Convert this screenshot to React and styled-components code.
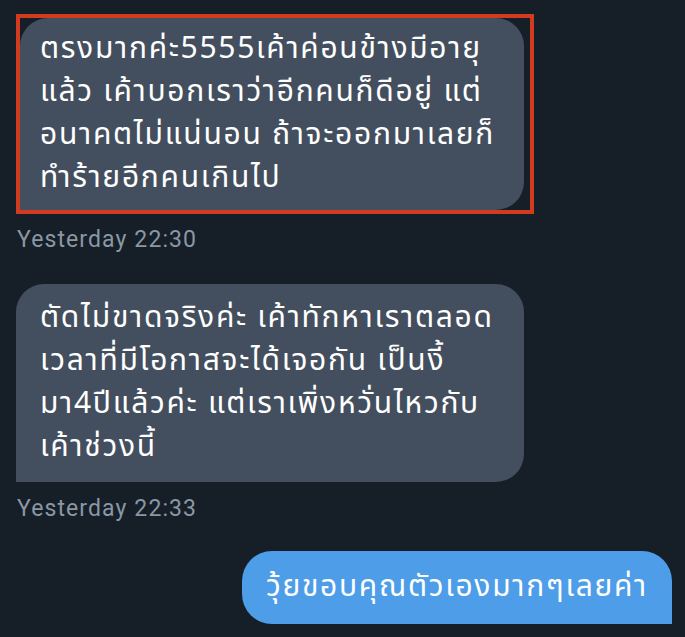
import styled, { createGlobalStyle } from 'styled-components';

const GlobalStyle = createGlobalStyle`
    html, body {
        margin: 0;
        padding: 0;
        background: #161e27;
    }
    body {
        font-family: "Noto Sans Thai", "Noto Sans", "DejaVu Sans", sans-serif;
        -webkit-font-smoothing: antialiased;
    }
`;

const Screen = styled.div`
    width: 685px;
    height: 637px;
    overflow: hidden;
    background: #161e27;
    display: flex;
    flex-direction: column;
    padding: 14px 0 0 0;
    box-sizing: border-box;
`;

const Highlight = styled.div`
    align-self: flex-start;
    margin-left: 16px;
    border: 4px solid #d33b20;
    padding: 0 6px 0 0;
    display: flex;
`;

const Bubble = styled.div`
    background: ${p => p.$sent ? '#4d9de8' : '#434f5e'};
    color: #ffffff;
    font-size: 30px;
    letter-spacing: 1.7px;
    line-height: 43px;
    white-space: nowrap;
    padding: ${p => p.$pad || '11px 24px'};
    border-radius: ${p => p.$sent ? '30px 30px 0 30px' : '28px 28px 28px 0'};
    width: ${p => p.$width || 'auto'};
    box-sizing: border-box;
`;

const ReceivedRow = styled.div`
    align-self: flex-start;
    margin-left: 16px;
    margin-top: ${p => p.$top || 0}px;
`;

const SentRow = styled.div`
    align-self: flex-end;
    margin-right: 13px;
    margin-top: ${p => p.$top || 0}px;
`;

const Stamp = styled.div`
    margin: ${p => p.$margin};
    font-size: 23px;
    letter-spacing: 1.1px;
    line-height: 24px;
    color: #8a97a4;
    font-family: "Roboto", "Liberation Sans", sans-serif;
`;

const Lines = ({ lines }) => lines.map((l, i) => <div key={i}>{l}</div>);

const first = [
    'ตรงมากค่ะ5555เค้าค่อนข้างมีอายุ',
    'แล้ว เค้าบอกเราว่าอีกคนก็ดีอยู่ แต่',
    'อนาคตไม่แน่นอน ถ้าจะออกมาเลยก็',
    'ทำร้ายอีกคนเกินไป',
];

const second = [
    'ตัดไม่ขาดจริงค่ะ เค้าทักหาเราตลอด',
    'เวลาที่มีโอกาสจะได้เจอกัน เป็นงี้',
    'มา4ปีแล้วค่ะ แต่เราเพิ่งหวั่นไหวกับ',
    'เค้าช่วงนี้',
];

export default function App() {
    return (
        <Screen>
            <GlobalStyle />
            <Highlight>
                <Bubble $width="504px" $pad="10px 20px">
                    <Lines lines={first} />
                </Bubble>
            </Highlight>
            <Stamp $margin="14px 0 0 17px">Yesterday 22:30</Stamp>
            <ReceivedRow $top={32}>
                <Bubble $width="508px" $pad="13px 24px">
                    <Lines lines={second} />
                </Bubble>
            </ReceivedRow>
            <Stamp $margin="15px 0 0 17px">Yesterday 22:33</Stamp>
            <SentRow $top={30}>
                <Bubble $sent $pad="15px 24px">
                    วุ้ยขอบคุณตัวเองมากๆเลยค่า
                </Bubble>
            </SentRow>
        </Screen>
    );
}
